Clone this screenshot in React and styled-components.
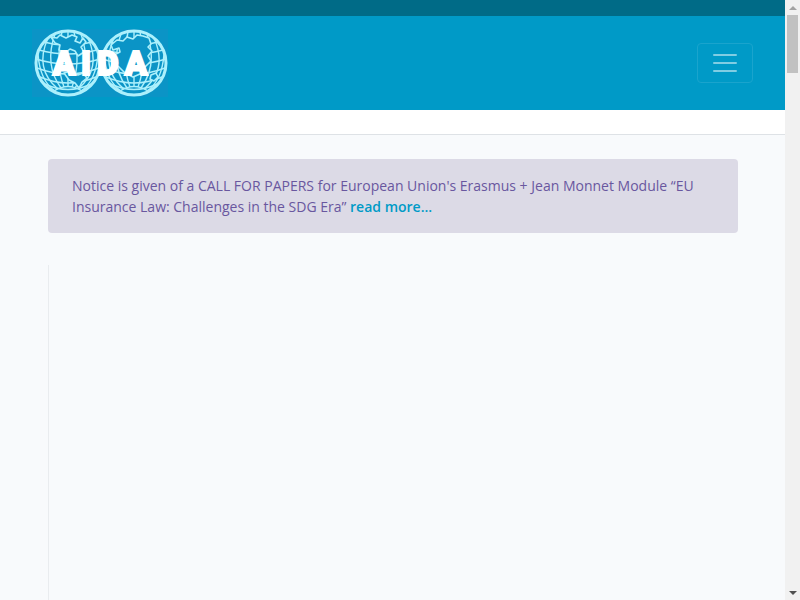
import React from "react";
import styled, { createGlobalStyle } from "styled-components";

const GlobalStyle = createGlobalStyle`
  *, *::before, *::after { box-sizing: border-box; }
  body {
    margin: 0;
    background: #f8fafc;
    color: #212529;
    font: 400 14px/21px "Open Sans", sans-serif;
  }
`;

const Shell = styled.div`
  display: grid;
  grid-template-columns: minmax(0, 1fr) 15px;
  height: 100vh;
  overflow: hidden;
`;

const Page = styled.div`
  display: flex;
  flex-direction: column;
  min-height: 0;
  overflow: hidden;
`;

const TopBar = styled.div`
  flex: none;
  height: 16px;
  background: #006b87;
`;

const Header = styled.header`
  display: flex;
  flex: none;
  align-items: center;
  justify-content: space-between;
  padding: 13px 32px;
  background: #009ac7;
`;

const HomeLink = styled.a`
  display: block;
  line-height: 0;
`;

const MenuButton = styled.button`
  display: flex;
  align-items: center;
  justify-content: center;
  width: 56px;
  height: 40px;
  padding: 0;
  border: 1px solid #1aa4cd;
  border-radius: 4px;
  background: transparent;
  color: #80cde3;
`;

const SubBar = styled.div`
  flex: none;
  height: 25px;
  border-bottom: 1px solid #dee2e6;
  background: #fff;
`;

const Main = styled.main`
  display: flex;
  flex: 1;
  flex-direction: column;
  gap: 32px;
  padding: 24px 47px 0 48px;
`;

const Notice = styled.div`
  padding: 16px 24px;
  border-radius: 4px;
  background: #dcdae6;
  color: #69579f;
`;

const NoticeText = styled.p`
  margin: 0;
`;

const MoreLink = styled.a`
  color: #009ac7;
  font-weight: 600;
  text-decoration: none;
`;

const Feature = styled.section`
  flex: 1;
  border-left: 1px solid #e9ecef;
`;

const Scrollbar = styled.div`
  display: flex;
  flex-direction: column;
  background: #f1f1f1;
`;

const ScrollArrow = styled.span`
  display: flex;
  flex: none;
  align-items: center;
  justify-content: center;
  height: 15px;
  color: ${({ $dim }) => ($dim ? "#a3a3a3" : "#505050")};
`;

const ScrollTrack = styled.div`
  flex: 1;
  padding: 0 2px;
`;

const ScrollThumb = styled.div`
  height: 58px;
  background: #c1c1c1;
`;

function Globe({ cx, cy, land }) {
  return (
    <g transform={`translate(${cx} ${cy})`} fill="none" stroke="#acf0fc" strokeWidth="1.4" strokeLinejoin="round">
      <path d="M-24-21Q0-14 24-21M-29-13Q0-5 29-13M-32-4Q0 6 32-4M-31 5Q0 17 31 5M-28 14Q0 26 28 14M-23 21Q0 32 23 21M-14 28Q0 19 14 28" />
      <path d="M0-32V23M-6-31Q-13 0-4 24M6-31Q13 0 4 24M-13-29Q-24 2-7 25M13-29Q24 2 7 25M-20-25Q-34 6-10 26M20-25Q34 6 10 26M-30-9Q-28 18-13 28M30-9Q28 18 13 28" />
      <path d={land} fill="#0b94c6" strokeWidth="1.6" />
      <circle r="32" strokeWidth="3" />
    </g>
  );
}

function Logo() {
  return (
    <svg width="136" height="68" viewBox="0 0 136 68" role="img" aria-label="AIDA">
      <rect width="136" height="68" fill="#0b94c6" />
      <Globe
        cx={36}
        cy={34}
        land="M-17-26-11-25-8-28-2-25 4-28 9-26 7-22 12-20 15-25 18-21 13-16 16-11 10-7 7-12 2-14-3-10-9-13-8-18-13-20ZM-4 10 3 8 10 12 15 10 19 15 14 19 11 25 7 20 1 17Z"
      />
      <Globe
        cx={102}
        cy={34}
        land="M-23-18-17-23-11-22-7-26-1-24 3-28 9-27 15-25 17-19 14-16 18-12 14-7 17-2 11 4 6 11-1 14-9 10-15 4-21 0-20-8-14-11-15-15-21-13ZM17 12 22 10 24 14 20 18 16 16Z"
      />
      <text
        x="32 54 76 104"
        y="46"
        textAnchor="middle"
        fill="#fff"
        stroke="#fff"
        strokeWidth="2"
        fontFamily="Roboto, sans-serif"
        fontWeight="900"
        fontSize="33"
      >
        AIDA
      </text>
    </svg>
  );
}

export default function App() {
  return (
    <>
      <GlobalStyle />
      <Shell>
        <Page>
          <TopBar />
          <Header>
            <HomeLink href="#home" aria-label="AIDA home"><Logo /></HomeLink>
            <MenuButton type="button" aria-label="Toggle navigation">
              <svg width="30" height="30" viewBox="0 0 30 30" fill="none" stroke="currentColor" strokeWidth="2" strokeLinecap="round">
                <path d="M4 7h22M4 15h22M4 23h22" />
              </svg>
            </MenuButton>
          </Header>
          <SubBar />
          <Main>
            <Notice>
              <NoticeText>
                Notice is given of a CALL FOR PAPERS for European Union's Erasmus + Jean Monnet Module “EU Insurance Law: Challenges in the SDG Era” <MoreLink href="#notice">read more...</MoreLink>
              </NoticeText>
            </Notice>
            <Feature />
          </Main>
        </Page>
        <Scrollbar aria-hidden="true">
          <ScrollArrow $dim>
            <svg width="8" height="4" viewBox="0 0 8 4" fill="currentColor"><path d="M0 4 4 0 8 4Z" /></svg>
          </ScrollArrow>
          <ScrollTrack><ScrollThumb /></ScrollTrack>
          <ScrollArrow>
            <svg width="8" height="4" viewBox="0 0 8 4" fill="currentColor"><path d="M0 0 4 4 8 0Z" /></svg>
          </ScrollArrow>
        </Scrollbar>
      </Shell>
    </>
  );
}
